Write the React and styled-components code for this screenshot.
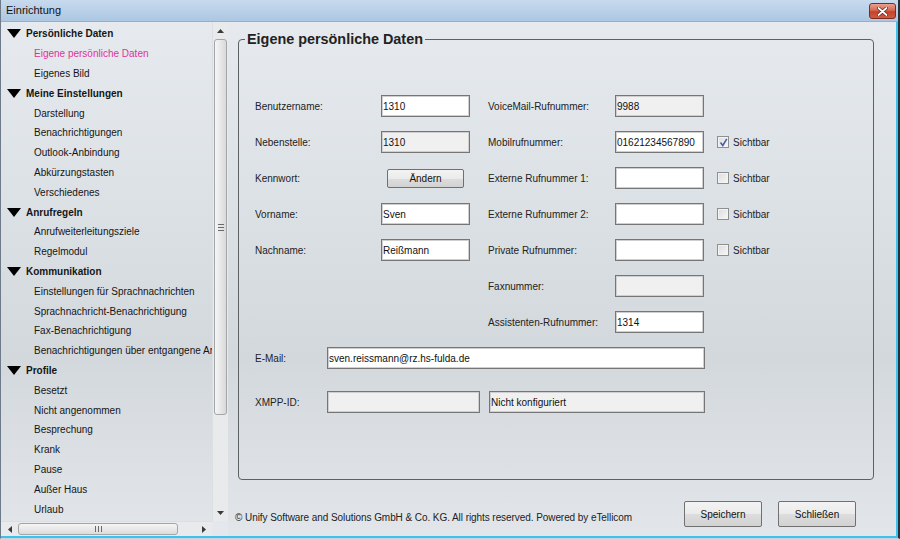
import styled, { createGlobalStyle } from 'styled-components';

const GlobalStyle = createGlobalStyle`
  html, body {
    margin: 0;
    padding: 0;
  }
  body {
    font-family: "Liberation Sans", Arial, sans-serif;
    font-size: 10px;
    color: #1c1c1c;
  }
`

const Window = styled.div`
  width: 900px;
  height: 539px;
  box-sizing: border-box;
  display: flex;
  flex-direction: column;
  border-left: 1px solid #6c7a8a;
  border-right: 2px solid #26313a;
  border-bottom: 1px solid #c9d3dc;
  overflow: hidden;
`

const TitleBar = styled.header`
  height: 22px;
  box-sizing: border-box;
  flex-shrink: 0;
  display: flex;
  align-items: center;
  justify-content: space-between;
  padding: 0 2px 1px 5px;
  background: linear-gradient(#c7daee, #adc7e2);
  border-bottom: 1px solid #98aec7;
  font-size: 11px;
  color: #111;
`

const CloseButton = styled.div`
  width: 27px;
  height: 16px;
  box-sizing: border-box;
  margin-top: 2px;
  display: flex;
  align-items: center;
  justify-content: center;
  border: 1px solid #7b2c20;
  border-radius: 3px;
  background: linear-gradient(#e9a290 0%, #d46a53 45%, #c4432b 55%, #cf5a40 100%);
`

const Body = styled.div`
  flex: 1;
  display: flex;
  min-height: 0;
  border-right: 2px solid #3dc2ee;
  border-bottom: 2px solid #3dc2ee;
  background: linear-gradient(#e6eaee 0%, #dce1e6 35%, #d3d8dd 65%, #e2e6ea 100%);
`

const Sidebar = styled.aside`
  width: 227px;
  flex-shrink: 0;
  display: grid;
  grid-template-columns: 211px 16px;
  grid-template-rows: 1fr 15px;
`

const Tree = styled.nav`
  overflow: hidden;
  padding-top: 2px;
  white-space: nowrap;
`

const TreeRow = styled.div`
  height: 19.8px;
  display: flex;
  align-items: center;
  gap: 5px;
  padding-left: ${p => (p.$header ? '6px' : '33px')};
  font-weight: ${p => (p.$header ? 'bold' : 'normal')};
  color: ${p => (p.$active ? '#e0329a' : '#151515')};
`

const VScroll = styled.div`
  display: flex;
  flex-direction: column;
  background: #e9eaeb;
  border-left: 1px solid #dcdfe2;
`

const HScroll = styled.div`
  grid-column: 1;
  display: flex;
  align-items: stretch;
  background: #e9eaeb;
  border-top: 1px solid #dcdfe2;
`

const Corner = styled.div`
  background: #e4e8ec;
`

const ArrowBox = styled.div`
  flex: 0 0 ${p => (p.$size || 17)}px;
  display: flex;
  align-items: center;
  justify-content: center;
`

const Thumb = styled.div`
  box-sizing: border-box;
  display: flex;
  align-items: center;
  justify-content: center;
  border: 1px solid #a3a6a9;
  border-radius: 3px;
  ${p => p.$horizontal
    ? `width: 160px; margin: 1px 0; background: linear-gradient(#f5f5f5, #dcdcdc);`
    : `height: 376px; margin: 0 1px; background: linear-gradient(90deg, #f6f6f6, #d9d9d9);`}
`

const Spacer = styled.div`
  flex: 1;
`

const Main = styled.main`
  flex: 1;
  min-width: 0;
  display: flex;
  flex-direction: column;
  box-sizing: border-box;
  padding: 9px 22px 0 10px;
`

const GroupBox = styled.fieldset`
  flex: 1;
  min-height: 0;
  min-width: 0;
  margin: 0;
  padding: 0;
  border: 1px solid #5c6166;
  border-radius: 4px;
`

const Legend = styled.legend`
  margin-left: 6px;
  padding: 0 2px;
  font-size: 14.4px;
  line-height: 16px;
  font-weight: bold;
  color: #222;
`

const Form = styled.div`
  padding: 41px 0 0 16px;
`

const TopGrid = styled.div`
  display: grid;
  grid-template-columns: 126px 107px 127px 102px auto;
  grid-auto-rows: 36px;
  align-items: center;
`

const ContactGrid = styled.div`
  display: grid;
  grid-template-columns: 72px 378px;
  grid-template-rows: 36px 36px;
  row-gap: 8px;
  align-items: center;
`

const Label = styled.span`
  color: #222;
  white-space: nowrap;
`

const Field = styled.input`
  box-sizing: border-box;
  width: ${p => p.$width || 89}px;
  height: 22px;
  margin: 0;
  padding: 0 0 0 1px;
  font-family: "Liberation Sans", Arial, sans-serif;
  font-size: 10px;
  color: #111;
  border: 1px solid #767676;
  box-shadow: inset 0 0 0 1px #cfcfcf;
  background: ${p => (p.$grey ? '#f0f0f0' : '#ffffff')};
  outline: none;
`

const PairRow = styled.div`
  display: flex;
  gap: 9px;
`

const Button = styled.button`
  box-sizing: border-box;
  width: ${p => p.$width || 78}px;
  height: ${p => p.$height || 26}px;
  margin: 0 0 0 ${p => p.$offset || 0}px;
  padding: 0;
  font-family: "Liberation Sans", Arial, sans-serif;
  font-size: 10px;
  color: #111;
  border: 1px solid #707070;
  border-radius: 2px;
  background: linear-gradient(#f3f3f3 0%, #ebebeb 50%, #dddddd 51%, #d2d2d2 100%);
`

const CheckWrap = styled.label`
  display: flex;
  align-items: center;
  gap: 4px;
  color: #222;
`

const Box = styled.span`
  width: 12px;
  height: 12px;
  box-sizing: border-box;
  display: flex;
  align-items: center;
  justify-content: center;
  border: 1px solid #8e8f8f;
  background: linear-gradient(135deg, #dcdcdc, #f8f8f8);
  box-shadow: inset 0 0 0 1px #f4f4f4;
`

const Footer = styled.footer`
  height: 56px;
  flex-shrink: 0;
  display: flex;
  align-items: center;
  gap: 16px;
  box-sizing: border-box;
  padding: 21px 18px 9px 0;
  margin-left: -3px;
`

const Copyright = styled.span`
  flex: 1;
  padding-top: 6px;
  color: #222;
  letter-spacing: -0.07px;
  white-space: nowrap;
`

const sections = [
  { title: 'Persönliche Daten', items: ['Eigene persönliche Daten', 'Eigenes Bild'] },
  { title: 'Meine Einstellungen', items: ['Darstellung', 'Benachrichtigungen', 'Outlook-Anbindung', 'Abkürzungstasten', 'Verschiedenes'] },
  { title: 'Anrufregeln', items: ['Anrufweiterleitungsziele', 'Regelmodul'] },
  { title: 'Kommunikation', items: ['Einstellungen für Sprachnachrichten', 'Sprachnachricht-Benachrichtigung', 'Fax-Benachrichtigung', 'Benachrichtigungen über entgangene Anrufe'] },
  { title: 'Profile', items: ['Besetzt', 'Nicht angenommen', 'Besprechung', 'Krank', 'Pause', 'Außer Haus', 'Urlaub'] },
]

const rows = [
  { left: 'Benutzername:', leftValue: '1310', right: 'VoiceMail-Rufnummer:', rightValue: '9988', rightGrey: true },
  { left: 'Nebenstelle:', leftValue: '1310', leftGrey: true, right: 'Mobilrufnummer:', rightValue: '01621234567890', check: true, checked: true },
  { left: 'Kennwort:', button: 'Ändern', right: 'Externe Rufnummer 1:', rightValue: '', check: true },
  { left: 'Vorname:', leftValue: 'Sven', right: 'Externe Rufnummer 2:', rightValue: '', check: true },
  { left: 'Nachname:', leftValue: 'Reißmann', right: 'Private Rufnummer:', rightValue: '', check: true },
  { right: 'Faxnummer:', rightValue: '', rightGrey: true },
  { right: 'Assistenten-Rufnummer:', rightValue: '1314' },
]

function Triangle() {
  return (
    <svg width="14" height="9" viewBox="0 0 14 9">
      <path d="M0 0 H14 L7 9 Z" fill="#000" />
    </svg>
  )
}

function Arrow({ dir }) {
  const d = {
    up: 'M0 4 L3.5 0 L7 4 Z',
    down: 'M0 0 H7 L3.5 4 Z',
    left: 'M4 0 V7 L0 3.5 Z',
    right: 'M0 0 V7 L4 3.5 Z',
  }[dir]
  const vertical = dir === 'up' || dir === 'down'
  return (
    <svg width={vertical ? 7 : 4} height={vertical ? 4 : 7} viewBox={vertical ? '0 0 7 4' : '0 0 4 7'}>
      <path d={d} fill="#3a3a3a" />
    </svg>
  )
}

function Grip({ horizontal }) {
  return horizontal ? (
    <svg width="7" height="6" viewBox="0 0 7 6">
      <path d="M0.5 0 V6 M3.5 0 V6 M6.5 0 V6" stroke="#6a6a6a" strokeWidth="1" />
    </svg>
  ) : (
    <svg width="6" height="7" viewBox="0 0 6 7">
      <path d="M0 0.5 H6 M0 3.5 H6 M0 6.5 H6" stroke="#6a6a6a" strokeWidth="1" />
    </svg>
  )
}

function Checkbox({ checked }) {
  return (
    <CheckWrap>
      <Box>
        {checked && (
          <svg width="9" height="9" viewBox="0 0 9 9">
            <path d="M1.5 4.5 L3.8 7.5 L7.8 0.8" stroke="#4a61a8" strokeWidth="1.6" fill="none" />
          </svg>
        )}
      </Box>
      Sichtbar
    </CheckWrap>
  )
}

function App() {
  return (
    <>
      <GlobalStyle />
      <Window>
        <TitleBar>
          <span>Einrichtung</span>
          <CloseButton>
            <svg width="11" height="9" viewBox="0 0 11 9">
              <path d="M1.5 1 L9.5 8 M9.5 1 L1.5 8" stroke="#5a1d14" strokeWidth="3.2" strokeLinecap="round" />
              <path d="M1.5 1 L9.5 8 M9.5 1 L1.5 8" stroke="#ffffff" strokeWidth="1.8" strokeLinecap="round" />
            </svg>
          </CloseButton>
        </TitleBar>

        <Body>
          <Sidebar>
            <Tree>
              {sections.map((section) => (
                <div key={section.title}>
                  <TreeRow $header>
                    <Triangle />
                    {section.title}
                  </TreeRow>
                  {section.items.map((item) => (
                    <TreeRow key={item} $active={item === 'Eigene persönliche Daten'}>{item}</TreeRow>
                  ))}
                </div>
              ))}
            </Tree>
            <VScroll>
              <ArrowBox><Arrow dir="up" /></ArrowBox>
              <Thumb><Grip /></Thumb>
              <Spacer />
              <ArrowBox><Arrow dir="down" /></ArrowBox>
            </VScroll>
            <HScroll>
              <ArrowBox><Arrow dir="left" /></ArrowBox>
              <Thumb $horizontal><Grip horizontal /></Thumb>
              <Spacer />
              <ArrowBox><Arrow dir="right" /></ArrowBox>
            </HScroll>
            <Corner />
          </Sidebar>

          <Main>
            <GroupBox>
              <Legend>Eigene persönliche Daten</Legend>
              <Form>
                <TopGrid>
                  {rows.map((row) => (
                    <Row key={row.right} row={row} />
                  ))}
                </TopGrid>
                <ContactGrid>
                  <Label>E-Mail:</Label>
                  <Field $width={378} defaultValue="sven.reissmann@rz.hs-fulda.de" />
                  <Label>XMPP-ID:</Label>
                  <PairRow>
                    <Field $width={153} $grey readOnly defaultValue="" />
                    <Field $width={216} $grey readOnly defaultValue="Nicht konfiguriert" />
                  </PairRow>
                </ContactGrid>
              </Form>
            </GroupBox>
            <Footer>
              <Copyright>© Unify Software and Solutions GmbH &amp; Co. KG. All rights reserved. Powered by eTellicom</Copyright>
              <Button>Speichern</Button>
              <Button>Schließen</Button>
            </Footer>
          </Main>
        </Body>
      </Window>
    </>
  )
}

function Row({ row }) {
  return (
    <>
      <Label>{row.left || ''}</Label>
      {row.button ? (
        <div><Button $width={77} $height={19} $offset={6}>{row.button}</Button></div>
      ) : row.leftValue !== undefined ? (
        <Field $grey={row.leftGrey} readOnly={row.leftGrey} defaultValue={row.leftValue} />
      ) : (
        <span />
      )}
      <Label>{row.right}</Label>
      <Field $grey={row.rightGrey} readOnly={row.rightGrey} defaultValue={row.rightValue} />
      {row.check ? <Checkbox checked={row.checked} /> : <span />}
    </>
  )
}

export default App;
